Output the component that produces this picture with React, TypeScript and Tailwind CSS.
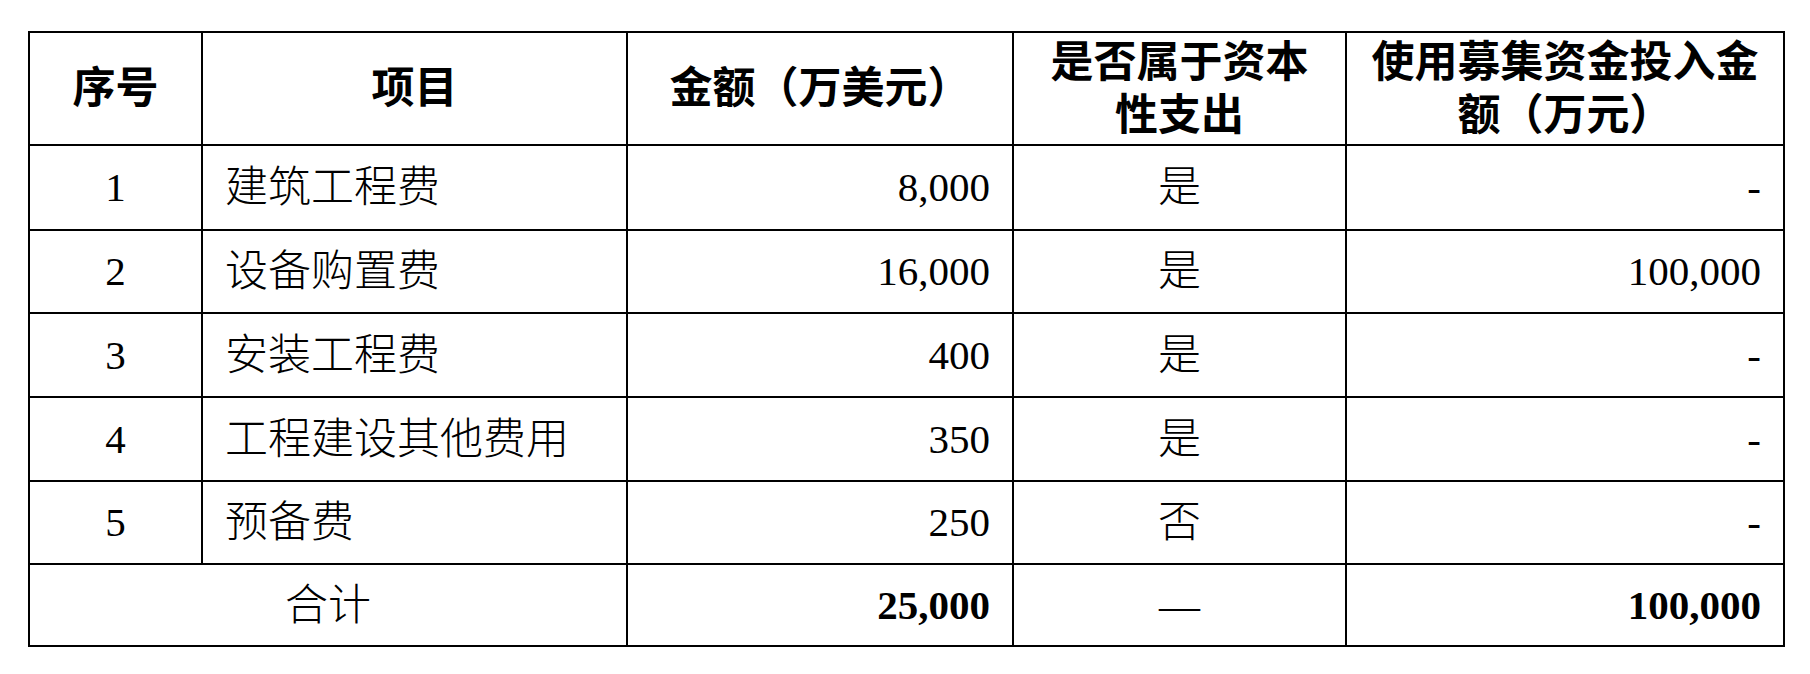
const rows = [
  { no: '1', item: '建筑工程费', amount: '8,000', capital: '是', used: '-', h: 'h-[85px]' },
  { no: '2', item: '设备购置费', amount: '16,000', capital: '是', used: '100,000', h: 'h-[83px]' },
  { no: '3', item: '安装工程费', amount: '400', capital: '是', used: '-', h: 'h-[84px]' },
  { no: '4', item: '工程建设其他费用', amount: '350', capital: '是', used: '-', h: 'h-[84px]' },
  { no: '5', item: '预备费', amount: '250', capital: '否', used: '-', h: 'h-[83px]' },
];

const cell = 'border-2 border-black px-[22px] align-middle';
const num = 'text-[41px]';

export default function App() {
  return (
    <div className="min-h-screen bg-white pt-[31px] pl-[28px] text-black font-['Liberation_Serif','Noto_Sans_CJK_SC',serif] text-[43px] leading-[53px]">
      <table className="table-fixed border-collapse w-[1755px]">
        <colgroup>
          <col className="w-[173px]" />
          <col className="w-[425px]" />
          <col className="w-[386px]" />
          <col className="w-[333px]" />
          <col className="w-[438px]" />
        </colgroup>
        <thead>
          <tr className="h-[113px]">
            <th className={`${cell} text-center font-bold`}>序号</th>
            <th className={`${cell} text-center font-bold`}>项目</th>
            <th className={`${cell} text-center font-bold`}>金额（万美元）</th>
            <th className={`${cell} text-center font-bold`}>
              是否属于资本
              <br />
              性支出
            </th>
            <th className={`${cell} text-center font-bold px-[10px]`}>
              使用募集资金投入金
              <br />
              额（万元）
            </th>
          </tr>
        </thead>
        <tbody className="font-light">
          {rows.map((r) => (
            <tr key={r.no} className={r.h}>
              <td className={`${cell} text-center ${num} font-normal`}>{r.no}</td>
              <td className={`${cell} text-left`}>{r.item}</td>
              <td className={`${cell} text-right ${num} font-normal`}>{r.amount}</td>
              <td className={`${cell} text-center`}>{r.capital}</td>
              <td className={`${cell} text-right ${num} font-normal`}>{r.used}</td>
            </tr>
          ))}
          <tr className="h-[82px]">
            <td colSpan={2} className={`${cell} text-center`}>合计</td>
            <td className={`${cell} text-right ${num} font-bold`}>25,000</td>
            <td className={`${cell} text-center ${num} font-normal`}>—</td>
            <td className={`${cell} text-right ${num} font-bold`}>100,000</td>
          </tr>
        </tbody>
      </table>
    </div>
  );
}
